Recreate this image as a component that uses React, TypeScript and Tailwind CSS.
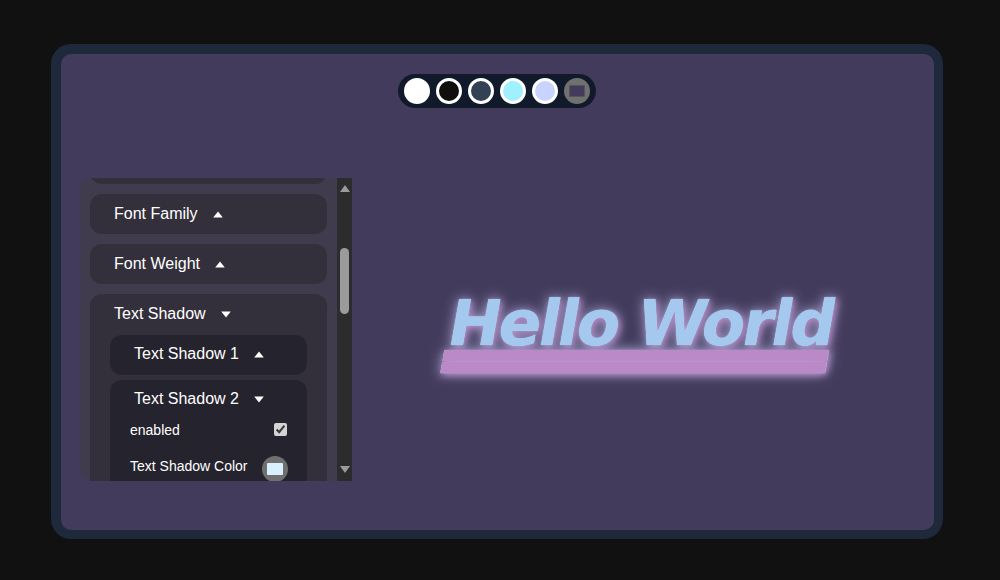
import React from "react";

const swatches = ["bg-white", "bg-[#110f0e]", "bg-[#334155]", "bg-[#a0f0ff]", "bg-[#c8d4ff]"];

const Arrow = ({ up }: { up?: boolean }) => (
  <svg width="10" height="7" viewBox="0 0 10 7" className="shrink-0">
    <path d={up ? "M5 .5 9.8 6.5H.2Z" : "M.2 .5H9.8L5 6.5Z"} fill="#fff" />
  </svg>
);

const Header = ({ label, up, className }: { label: string; up?: boolean; className: string }) => (
  <div className={`flex h-10 items-center gap-[15px] rounded-xl text-base text-white ${className}`}>
    <span>{label}</span>
    <Arrow up={up} />
  </div>
);

const Scrollbar = () => (
  <div className="flex h-full w-[15px] shrink-0 flex-col items-center bg-[#2c2c2c]">
    <svg width="10" height="7" viewBox="0 0 10 7" className="mt-[7px]">
      <path d="M5 0 10 7H0Z" fill="#9b9b9b" />
    </svg>
    <div className="mt-[56px] h-[66px] w-[9px] rounded-[5px] bg-[#9b9b9b]" />
    <div className="flex-1" />
    <svg width="10" height="7" viewBox="0 0 10 7" className="mb-[8px]">
      <path d="M0 0H10L5 7Z" fill="#9b9b9b" />
    </svg>
  </div>
);

const Panel = () => (
  <div className="flex h-[303px] w-[272px] shrink-0 overflow-hidden rounded-l-xl bg-[#403c4d] font-['Liberation_Sans',sans-serif]">
    <div className="flex w-[257px] flex-col gap-2.5 overflow-hidden pl-2.5 pr-2.5">
      <div className="-mt-[34px] h-10 shrink-0 rounded-xl bg-[#332f3b]" />
      <Header label="Font Family" up className="shrink-0 bg-[#332f3b] pl-6" />
      <Header label="Font Weight" up className="shrink-0 bg-[#332f3b] pl-6" />
      <div className="flex shrink-0 flex-col rounded-xl bg-[#332f3b] px-5 pb-2">
        <div className="flex h-10 items-center gap-[15px] pl-1 text-base text-white">
          <span>Text Shadow</span>
          <Arrow />
        </div>
        <div className="mt-[1px] flex flex-col gap-[5px]">
          <Header label="Text Shadow 1" up className="bg-[#25232e] pb-[2px] pl-6" />
          <div className="rounded-xl bg-[#25232e] pb-2">
            <Header label="Text Shadow 2" className="pb-[2px] pl-6" />
            <div className="-mt-[1px] flex h-[21px] items-center justify-between pl-5 pr-5 text-sm text-white">
              <span>enabled</span>
              <input type="checkbox" checked readOnly className="m-0 h-[13px] w-[13px] accent-[#d4d4d4]" />
            </div>
            <div className="mt-[15px] flex items-start justify-between pl-5 pr-[19px] text-sm text-white">
              <span className="mt-[1px]">Text Shadow Color</span>
              <div className="mt-[1px] flex h-[26px] w-[26px] items-center justify-center rounded-full bg-[#707070]">
                <div className="h-[12px] w-[16px] rounded-[1px] bg-[#d8f0ff]" />
              </div>
            </div>
          </div>
        </div>
      </div>
    </div>
    <Scrollbar />
  </div>
);

export default function App() {
  return (
    <div className="flex h-[580px] w-[1000px] items-start bg-[#111111] pl-[51px] pt-[44px]">
      <div className="h-[495px] w-[892px] rounded-[20px] bg-[#1e293b] pb-[9px] pl-2.5 pr-[9px] pt-2.5">
        <div className="flex h-full flex-col rounded-[10px] bg-[#433b5c]">
          <div className="mt-5 flex justify-center pr-[2px]">
            <div className="flex h-[34px] items-center gap-1.5 rounded-full bg-[#111a2b] px-1.5">
              {swatches.map((s) => (
                <div key={s} className={`h-[26px] w-[26px] rounded-full border-[3px] border-white ${s}`} />
              ))}
              <div className="flex h-[26px] w-[26px] items-center justify-center rounded-full bg-[#707070]">
                <div className="h-[12px] w-[16px] rounded-[1px] border border-[#555] bg-[#433b5c]" />
              </div>
            </div>
          </div>
          <div className="mt-[70px] flex h-[303px] pl-[19px]">
            <Panel />
            <div className="flex flex-1 items-center justify-center pb-[13px] pr-[4px]">
              <span className="inline-block -skew-x-[10deg] font-['DejaVu_Sans',sans-serif] text-[63px] font-bold leading-none tracking-[-2.5px] text-[#a5c8ee] underline decoration-[#bb88c8] decoration-double decoration-[10.5px] underline-offset-[5px] [text-shadow:0_0_1px_#a0f0ff,2px_2px_7px_#bb88c8,0_0_14px_#c8d4ffb0]">
                Hello World
              </span>
            </div>
          </div>
        </div>
      </div>
    </div>
  );
}
